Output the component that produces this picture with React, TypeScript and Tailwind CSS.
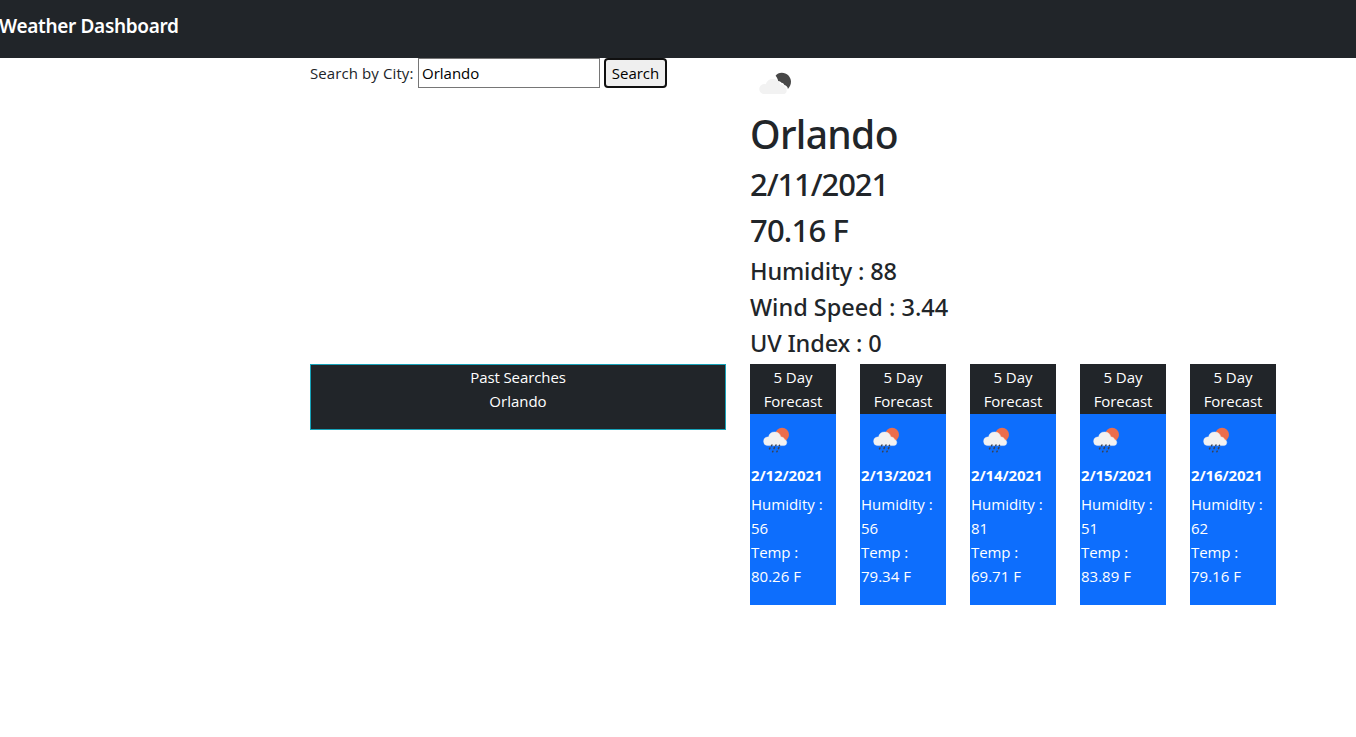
import { useState } from "react";

type Day = { date: string; humidity: number; temp: string };

const days: Day[] = [
  { date: "2/12/2021", humidity: 56, temp: "80.26" },
  { date: "2/13/2021", humidity: 56, temp: "79.34" },
  { date: "2/14/2021", humidity: 81, temp: "69.71" },
  { date: "2/15/2021", humidity: 51, temp: "83.89" },
  { date: "2/16/2021", humidity: 62, temp: "79.16" },
];

function CloudyNightIcon() {
  return (
    <svg viewBox="0 0 50 50" className="block size-[50px]" aria-hidden="true">
      <path
        d="M25.600 17.800c1.300-1.900 3.500-3.100 6.200-3.100 5 0 9.200 4 9.200 8.900 0 3-1.100 5.500-3.100 7.300-.1-1.900-1.500-3.400-3.500-3.900-.4-1.200-1.500-2.300-3-2.200-.7-1.200-1.900-1.700-3.200-1.500-.3-2-1.200-3.700-2.600-5.500z"
        fill="#484848"
      />
      <path
        d="M14.500 36a5 5 0 0 1-.5-10c.6-.1 1.200 0 1.700.2a7.700 7.700 0 0 1 14.600 0 5.100 5.100 0 0 1 4.700 3A3.900 3.900 0 0 1 34.500 36z"
        fill="#f2f2f2"
      />
    </svg>
  );
}

function RainIcon() {
  return (
    <svg viewBox="0 0 50 50" className="block size-[50px]" aria-hidden="true">
      <circle cx="31.100" cy="19.700" r="6.900" fill="#ec6e4c" />
      <path
        d="M16.500 30.600a4.400 4.400 0 0 1-.3-8.700c.5 0 1 0 1.300.1a6.300 6.300 0 0 1 12.300-.2 4.400 4.400 0 0 1 4 2.700A3.200 3.200 0 0 1 33.300 30.600z"
        fill="#f2f2f2"
        stroke="#f2f2f2"
        strokeWidth=".4"
      />
      <g stroke="#3b4252" strokeWidth="1.500" strokeLinecap="round">
        <path d="M20.900 30l-.4.800M25 30l-.2.500M28.500 30.200l-.2.500" />
        <path d="M18.900 33l-.4.900M23.500 32.300l-.5 1.300M27.900 32.700l-.5 1" />
        <path d="M21.900 36.200l-.3.600M26.200 36.100l-.3.700" />
      </g>
    </svg>
  );
}

function ForecastCard({ day }: { day: Day }) {
  return (
    <article className="w-[86px] text-white">
      <header className="h-[50px] bg-[#212529] pt-px text-center leading-6">
        <p>5 Day</p>
        <p className="tracking-[-0.1px]">Forecast</p>
      </header>
      <div className="h-[191px] bg-[#0d6efd] p-px">
        <RainIcon />
        <h5 className="mb-2 h-[19px] leading-[20px] font-bold tracking-[-0.1px]">{day.date}</h5>
        <p className="leading-6">
          <span className="block">Humidity :</span>
          <span className="block">{day.humidity}</span>
          <span className="block tracking-[-0.1px]">Temp :</span>
          <span className="block">{day.temp} F</span>
        </p>
      </div>
    </article>
  );
}

export default function App() {
  const [city, setCity] = useState("Orlando");

  return (
    <div className="min-h-screen overflow-hidden bg-white font-['Open_Sans','Noto_Sans',sans-serif] text-[15px] text-[#212529]">
      <nav className="h-[58px] bg-[#212529] pt-3">
        <h1 className="-ml-px font-['Noto_Sans',sans-serif] text-[19px]/[29px] font-semibold tracking-[-0.32px] text-white">
          Weather Dashboard
        </h1>
      </nav>

      <main className="ml-[310px] grid grid-cols-[416px_526px] grid-rows-[306px_auto] gap-x-6">
        <form className="flex h-[30px] items-center gap-1" onSubmit={(e) => e.preventDefault()}>
          <label htmlFor="city" className="w-[104px] whitespace-nowrap tracking-[0.1px]">
            Search by City:
          </label>
          <input
            id="city"
            value={city}
            onChange={(e) => setCity(e.target.value)}
            className="h-[30px] w-[182px] border border-[#767676] bg-white px-[3px] text-black"
          />
          <button className="h-[30px] w-[63px] rounded-[4px] border-2 border-[#101010] bg-[#efefef] leading-6 text-black">
            Search
          </button>
        </form>

        <section className="font-['Noto_Sans',sans-serif] font-medium">
          <CloudyNightIcon />
          <h2 className="mb-2 h-12 text-[39px]/[52px] tracking-[-0.65px]">Orlando</h2>
          <h3 className="mb-2 h-[38px] pt-px text-[31px]/[38px] tracking-[-1.1px]">2/11/2021</h3>
          <h3 className="mb-2 h-[38px] pt-px text-[31px]/[38px] tracking-[-0.8px]">70.16 F</h3>
          <h4 className="mb-2 h-7 text-[23.5px]/[30px] tracking-[-0.15px]">Humidity : 88</h4>
          <h4 className="mb-2 h-7 text-[23.5px]/[30px]">Wind Speed : 3.44</h4>
          <h4 className="mb-2 h-7 text-[23.5px]/[30px] tracking-[-0.15px]">UV Index : 0</h4>
        </section>

        <section className="h-[66px] border border-[#17a2b8] bg-[#212529] text-center leading-6 text-white">
          <p className="tracking-[-0.1px]">Past Searches</p>
          <p>Orlando</p>
        </section>

        <section className="flex gap-6">
          {days.map((day) => (
            <ForecastCard key={day.date} day={day} />
          ))}
        </section>
      </main>
    </div>
  );
}
